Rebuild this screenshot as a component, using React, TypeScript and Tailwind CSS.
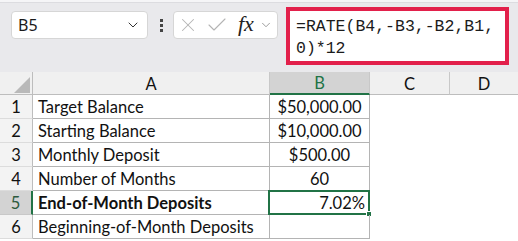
import { ChevronDown, X, Check } from "lucide-react";

const rows = [
  { n: 1, a: "Target Balance", b: "$50,000.00" },
  { n: 2, a: "Starting Balance", b: "$10,000.00" },
  { n: 3, a: "Monthly Deposit", b: "$500.00" },
  { n: 4, a: "Number of Months", b: "60" },
  { n: 5, a: "End-of-Month Deposits", b: "7.02%" },
  { n: 6, a: "Beginning-of-Month Deposits", b: "" },
];

export default function App() {
  return (
    <div className="w-[518px] h-[241px] overflow-hidden bg-[#e9e9ec] flex flex-col">
      {/* ribbon edge */}
      <div className="h-[3px] shrink-0 bg-[#f5f5f7] border-b border-[#dcdce0]" />

      {/* Formula bar */}
      <div className="h-[69px] shrink-0 flex items-start pl-[11px]">
        <div className="mt-[8px] w-[137px] h-[28px] bg-white border border-[#d6d6d6] rounded-[4px] flex items-center justify-between pl-[6px] pr-[6px]">
          <span className="text-[16px] text-[#1b1b1b] font-['Noto_Sans',sans-serif]">B5</span>
          <ChevronDown size={16} strokeWidth={1.5} className="text-[#333]" />
        </div>
        <div className="mt-[16px] ml-[11px] w-[4px] flex flex-col gap-[2px] items-center">
          <div className="w-[3px] h-[3px] bg-[#444]" />
          <div className="w-[3px] h-[3px] bg-[#444]" />
          <div className="w-[3px] h-[3px] bg-[#444]" />
        </div>
        <div className="mt-[8px] ml-[10px] w-[105px] h-[28px] bg-white border border-[#d6d6d6] rounded-[4px] flex items-center pl-[3px]">
          <X size={22} strokeWidth={1.1} className="text-[#b4b4b4]" />
          <Check size={24} strokeWidth={1.1} className="ml-[6px] text-[#b4b4b4]" />
          <span className="ml-[9px] text-[22px] leading-none italic text-[#222] font-['Liberation_Serif',serif] -mt-[2px]">fx</span>
          <ChevronDown size={14} strokeWidth={1.4} className="ml-[5px] text-[#888]" />
        </div>
        <div className="mt-[4px] ml-[8px] w-[223px] h-[58px] bg-white border-[4px] border-[#e2204b] pl-[6px] pt-[5px] font-['Liberation_Mono',monospace] text-[16.5px] leading-[22px] text-[#1b1b1b]">
          =RATE(B4,-B3,-B2,B1,
          <br />
          0)*12
        </div>
      </div>

      {/* Grid */}
      <div className="flex-1 grid grid-cols-[33px_237px_100px_80px_68px] grid-rows-[23px_24px_24px_24px_24px_24px_24px] bg-white font-['Lato',sans-serif] text-[16.5px] text-[#111]">
        <div className="relative bg-[#f0f0f0] border-r border-b border-[#bdbdbd]">
          <svg className="absolute left-[14px] top-[5px]" width="16" height="16" viewBox="0 0 16 16">
            <polygon points="16,0 16,16 0,16" fill="#b9b9b9" />
          </svg>
        </div>
        <div className="bg-[#f0f0f0] border-r border-b border-[#c8c8c8] border-b-[#bdbdbd] flex items-center justify-center pt-[2px]">A</div>
        <div className="bg-[#d3d3d3] border-r border-[#c8c8c8] border-b-2 border-b-[#217346] flex items-center justify-center pt-[2px] text-[#217346]">B</div>
        <div className="bg-[#f0f0f0] border-r border-b border-[#c8c8c8] border-b-[#bdbdbd] flex items-center justify-center pt-[2px]">C</div>
        <div className="bg-[#f0f0f0] border-b border-[#bdbdbd] flex items-center justify-center pt-[2px]">D</div>

        {rows.map((r) => {
          const sel = r.n === 5;
          return [
            <div
              key={`n${r.n}`}
              className={
                sel
                  ? "bg-[#d3d3d3] border-r-2 border-r-[#217346] border-b border-b-[#c8c8c8] flex items-center justify-center pt-[2px] text-[#2d5a3e]"
                  : "bg-[#f3f3f3] border-r border-b border-r-[#bdbdbd] border-b-[#dcdcdc] flex items-center justify-center pt-[2px]"
              }
            >
              {r.n}
            </div>,
            <div
              key={`a${r.n}`}
              className={`border-r border-b border-[#b4b4b4] flex items-center pl-[5px] pt-[2px] whitespace-nowrap ${sel ? "font-bold" : ""}`}
            >
              {r.a}
            </div>,
            <div
              key={`b${r.n}`}
              className={`relative border-r border-b border-[#b4b4b4] flex items-center pt-[2px] whitespace-nowrap ${
                sel ? "justify-end pr-[4px]" : "justify-center"
              }`}
            >
              {r.b}
              {sel && (
                <div className="absolute -left-[2px] -top-[1px] -right-[1px] -bottom-[1px] border-2 border-[#217346]">
                  <div className="absolute -right-[4px] -bottom-[4px] w-[6px] h-[6px] bg-[#217346] border border-white" />
                </div>
              )}
            </div>,
            <div key={`c${r.n}`} />,
            <div key={`d${r.n}`} />,
          ];
        })}
      </div>
    </div>
  );
}
